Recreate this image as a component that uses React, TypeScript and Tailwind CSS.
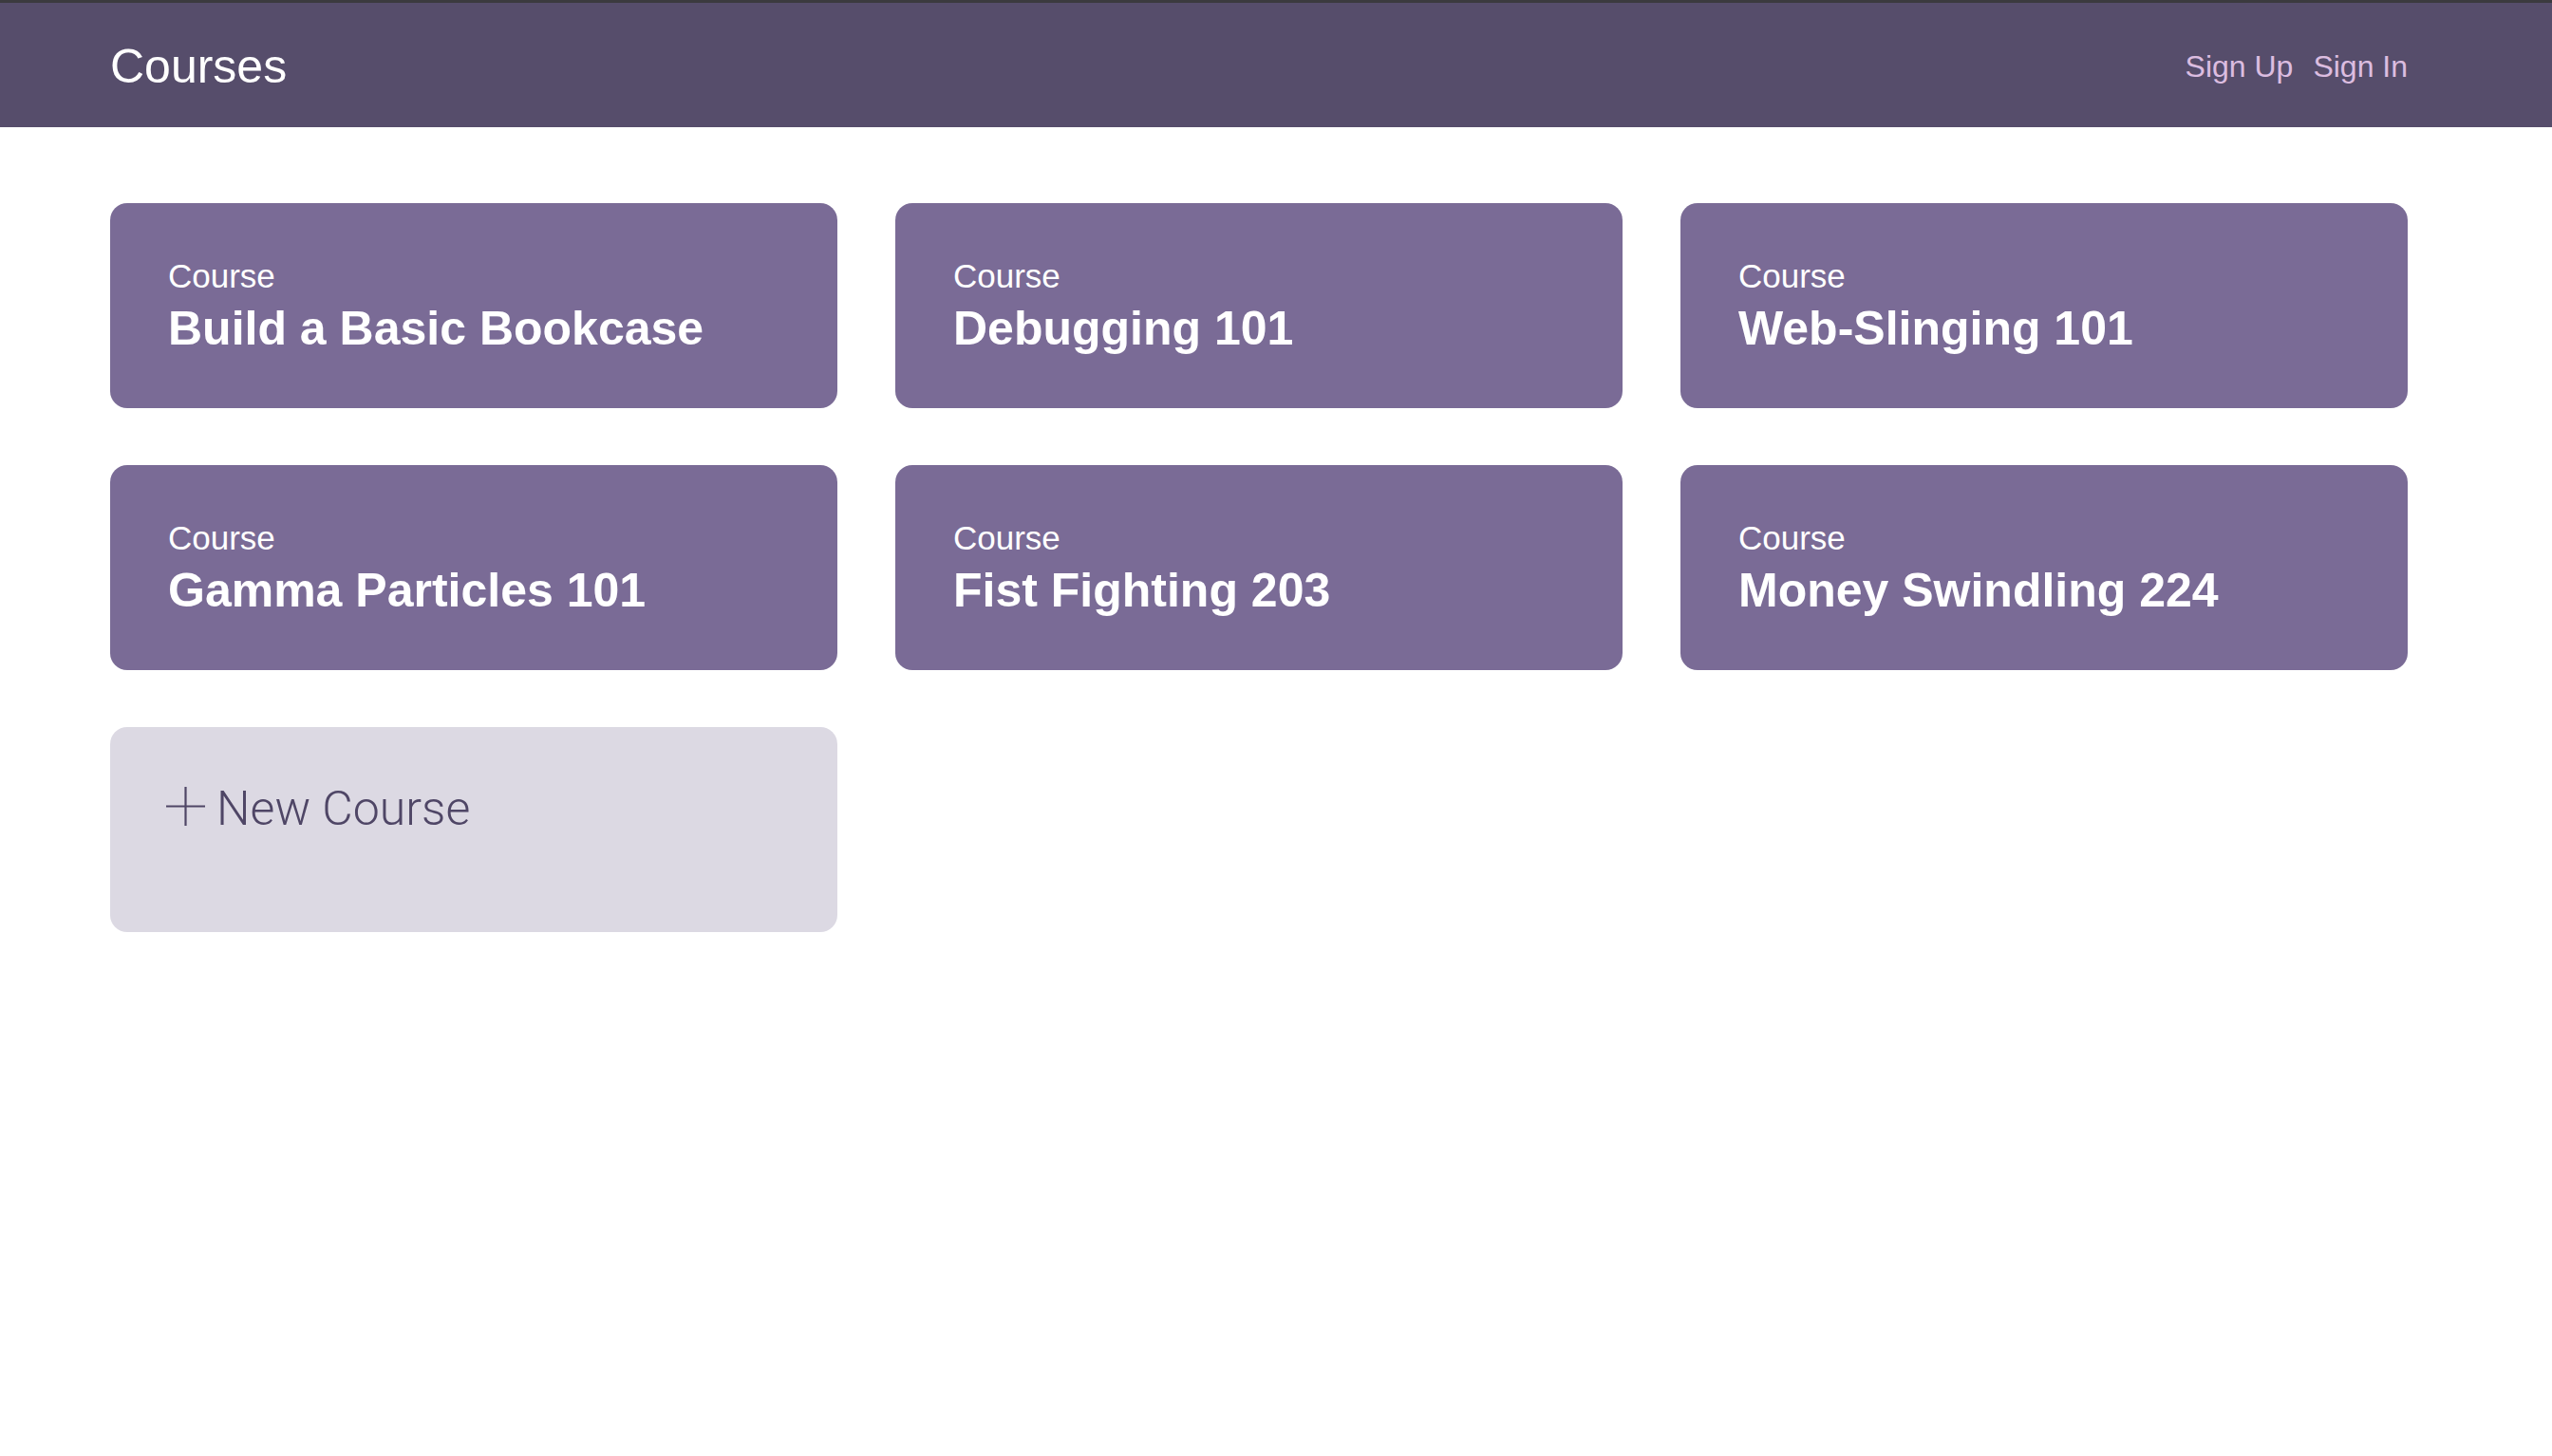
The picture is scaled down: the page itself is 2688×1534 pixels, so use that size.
const courses = [
  'Build a Basic Bookcase',
  'Debugging 101',
  'Web-Slinging 101',
  'Gamma Particles 101',
  'Fist Fighting 203',
  'Money Swindling 224',
];

const CourseCard = ({ title }: { title: string }) => (
  <a
    href="#"
    className="block h-[216px] rounded-[18px] bg-[#7a6b96] px-[61px] pt-[57px] text-white"
  >
    <div className="text-[35px] leading-[40px]">Course</div>
    <div className="mt-[7px] text-[50px] font-bold leading-[56px]">{title}</div>
  </a>
);

export default function App() {
  return (
    <div className="min-h-screen bg-white font-['Liberation_Sans',Arial,sans-serif]">
      {/* Header */}
      <header className="h-[134px] border-t-[3px] border-[#3b3a3f] bg-[#564d6b]">
        <div className="flex h-full items-center justify-between pl-[116px] pr-[152px] pt-[3px]">
          <h1 className="text-[50px] leading-[56px] text-white">Courses</h1>
          <nav className="flex gap-[21px] text-[32px] text-[#dcbde0]">
            <a href="#">Sign Up</a>
            <a href="#">Sign In</a>
          </nav>
        </div>
      </header>

      {/* Course grid */}
      <main className="grid grid-cols-3 gap-x-[61px] gap-y-[60px] pl-[116px] pr-[152px] pt-[80px]">
        {courses.map((c) => (
          <CourseCard key={c} title={c} />
        ))}
        <a
          href="#"
          className="flex h-[216px] items-start rounded-[18px] bg-[#dcd9e3] px-[59px] pt-[58px] text-[#4f4666]"
        >
          <svg className="mt-[5px] h-[41px] w-[41px] shrink-0" viewBox="0 0 41 41" fill="none">
            <path d="M20.5 0V41M0 20.5H41" stroke="currentColor" strokeWidth="2.2" />
          </svg>
          <span className="ml-[12px] font-['Roboto',sans-serif] text-[50px] font-light leading-[56px]">
            New Course
          </span>
        </a>
      </main>
    </div>
  );
}
